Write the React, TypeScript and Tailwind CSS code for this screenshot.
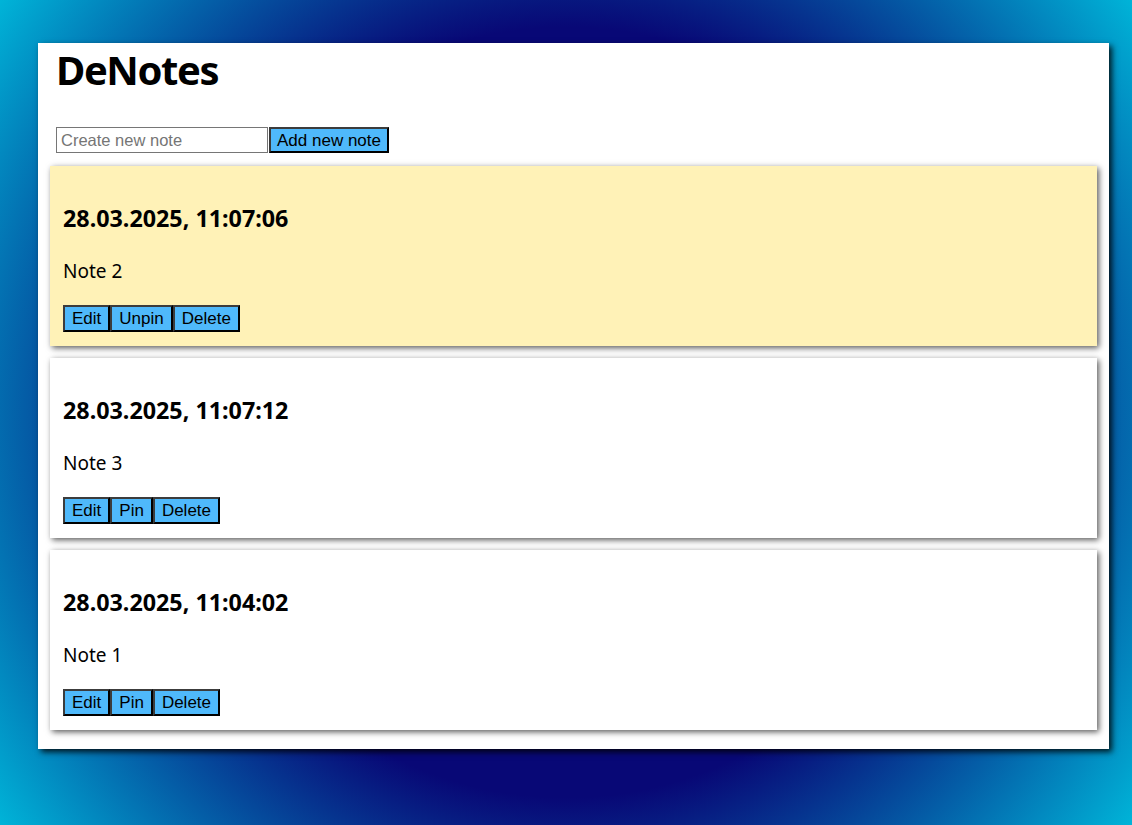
import React from "react";

type Note = { id: number; date: string; text: string; pinned: boolean };

const notes: Note[] = [
  { id: 2, date: "28.03.2025, 11:07:06", text: "Note 2", pinned: true },
  { id: 3, date: "28.03.2025, 11:07:12", text: "Note 3", pinned: false },
  { id: 1, date: "28.03.2025, 11:04:02", text: "Note 1", pinned: false },
];

const btn =
  "bg-[#4fb9fb] text-black text-[17px] leading-[19px] py-[2px] border-2 border-black border-t-[#3c3c3c] border-l-[#3c3c3c] font-['Liberation_Sans',Arial,sans-serif]";

function NoteCard({ note }: { note: Note }) {
  return (
    <div
      className={`${
        note.pinned ? "bg-[#fff2b7]" : "bg-white"
      } px-[13px] pt-[36px] pb-[14px] shadow-[2px_2px_6px_rgba(0,0,0,0.65)]`}
    >
      <h3 className="text-[23.3px] leading-[32px] font-bold">{note.date}</h3>
      <p className="mt-[23px] text-[19px] leading-[28px]">{note.text}</p>
      <div className="mt-[20px] flex">
        <button className={`${btn} px-[7px]`}>Edit</button>
        <button className={`${btn} px-[7px]`}>{note.pinned ? "Unpin" : "Pin"}</button>
        <button className={`${btn} px-[7px]`}>Delete</button>
      </div>
    </div>
  );
}

export default function App() {
  return (
    <div className="min-h-[825px] w-full pt-[43px] pl-[38px] bg-[radial-gradient(circle_at_center,#080876_55%,#00b4d8_100%)] font-['Noto_Sans',sans-serif] text-black">
      <div className="w-[1071px] h-[706px] bg-white shadow-[3px_3px_6px_rgba(0,0,0,0.85)] px-[12px]">
        <h1 className="pl-[6px] pt-[3px] text-[40px] leading-[48px] font-bold tracking-[-1.4px]">DeNotes</h1>
        <div className="mt-[33px] pl-[6px] flex items-stretch">
          <input
            placeholder="Create new note"
            className="w-[212px] h-[26px] border border-[#767676] px-[4px] text-[16.5px] font-['Liberation_Sans',Arial,sans-serif] placeholder:text-[#757575] outline-none"
          />
          <button className={`${btn} ml-px h-[26px] px-[6px] py-0`}>Add new note</button>
        </div>
        <div className="mt-[13px] flex flex-col gap-[12px]">
          {notes.map((n) => (
            <NoteCard key={n.id} note={n} />
          ))}
        </div>
      </div>
    </div>
  );
}
